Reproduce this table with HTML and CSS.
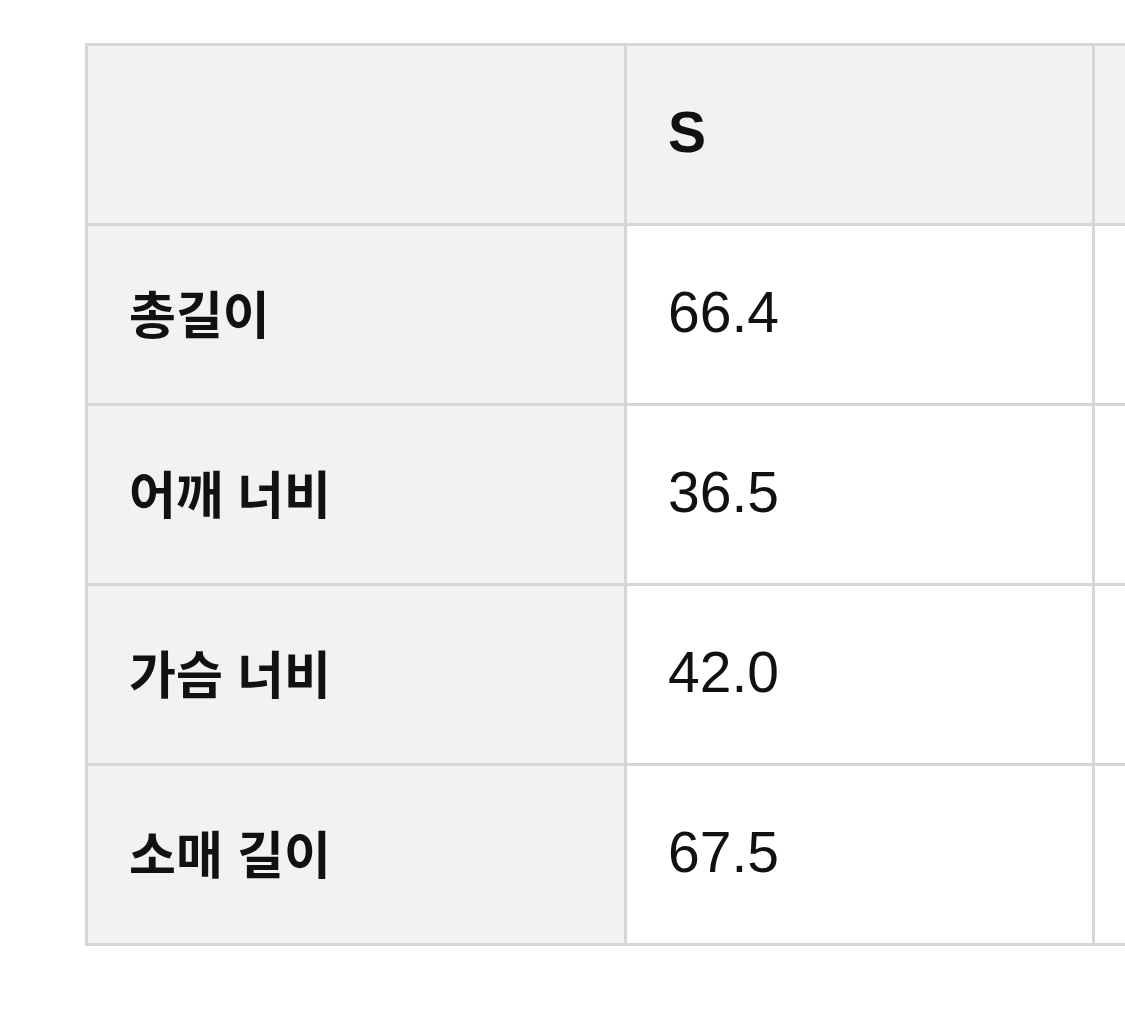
FILE: index.html
```html
<!DOCTYPE html>
<html lang="ko">
<head>
<meta charset="utf-8">
<link rel="stylesheet" href="styles.css">
</head>
<body>
<div class="wrap">
<table class="size-table">
  <colgroup>
    <col class="c-label">
    <col class="c-val">
    <col class="c-val">
  </colgroup>
  <thead>
    <tr>
      <th class="label"></th>
      <th class="val">S</th>
      <th class="val"></th>
    </tr>
  </thead>
  <tbody>
    <tr><th class="label">총길이</th><td class="val">66.4</td><td class="val"></td></tr>
    <tr><th class="label">어깨 너비</th><td class="val">36.5</td><td class="val"></td></tr>
    <tr><th class="label">가슴 너비</th><td class="val">42.0</td><td class="val"></td></tr>
    <tr><th class="label">소매 길이</th><td class="val">67.5</td><td class="val"></td></tr>
  </tbody>
</table>
</div>
</body>
</html>
```
FILE: styles.css
```css
html, body {
  margin: 0;
  padding: 0;
  background: #ffffff;
  overflow: hidden;
}
.wrap {
  padding: 43px 0 0 85px;
  width: 2000px;
}
.size-table {
  border-collapse: collapse;
  table-layout: fixed;
  width: 1475px;
  font-family: "Liberation Sans", "Noto Sans CJK KR", sans-serif;
  color: #111111;
}
.c-label { width: 539px; }
.c-val { width: 468px; }
.size-table th,
.size-table td {
  border: 3px solid #d6d6d6;
  height: 180px;
  padding: 0 0 6px 41px;
  text-align: left;
  vertical-align: middle;
  box-sizing: border-box;
}
.size-table thead th {
  background: #f2f2f2;
  font-weight: 700;
  font-size: 57px;
}
.size-table th.label {
  background: #f2f2f2;
  font-family: "Noto Sans CJK KR", sans-serif;
  font-weight: 700;
  font-size: 51px;
}
.size-table td.val {
  font-size: 57px;
  font-weight: 400;
}
```
